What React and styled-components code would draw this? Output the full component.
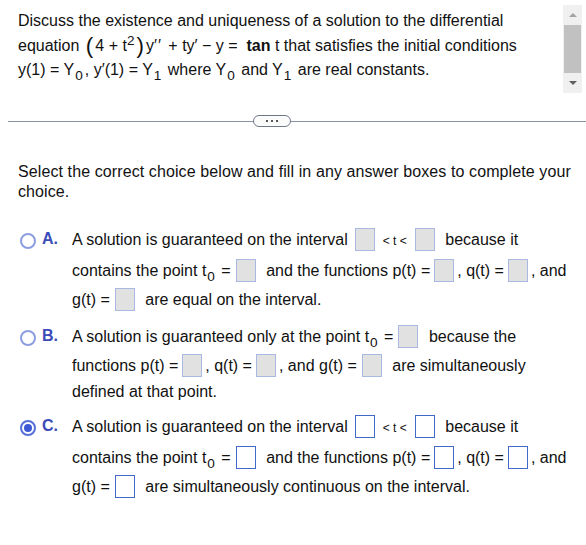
import React from 'react'
import styled, { createGlobalStyle } from 'styled-components'

const Global = createGlobalStyle`
  html, body { margin: 0; padding: 0; background: #fff; }
  body { font-family: Arial, "Liberation Sans", sans-serif; color: #111; }
`

const Page = styled.div`
  width: 586px;
  height: 545px;
  overflow: hidden;
`

const Top = styled.div`
  display: flex;
  height: 98px;
`

const Problem = styled.div`
  flex: 1;
  padding: 9px 0 0 18px;
  font-size: 16px;
  line-height: 24.5px;
  white-space: nowrap;
`

const Scroll = styled.div`
  width: 19px;
  margin: 5px 4px 5px 0;
  background: #f0f0f0;
  display: flex;
  flex-direction: column;
  align-items: center;
`

const Arrow = styled.div`
  width: 0;
  height: 0;
  border-left: 4px solid transparent;
  border-right: 4px solid transparent;
  ${p => p.down ? 'border-top: 4px solid #606060;' : 'border-bottom: 4px solid #a3a3a3;'}
  margin: 8px 0;
`

const Thumb = styled.div`
  width: 17px;
  flex: 1;
  background: #c1c1c1;
`

const Sub = styled.sub`
  font-size: 0.85em;
  vertical-align: -0.35em;
  line-height: 0;
  margin: 0 2px 0 1px;
`

const Sup = styled.sup`
  font-size: 0.85em;
  line-height: 0;
`

const Paren = styled.span`
  font-size: 1.4em;
  vertical-align: -0.08em;
  margin: 0 2px;
`

const Prime = styled.span`
  letter-spacing: 1px;
  margin-right: 2px;
`

const Divider = styled.div`
  display: flex;
  align-items: center;
  padding-left: 8px;
  margin-top: 16px;
  height: 14px;
`

const Rule = styled.div`
  flex: ${p => p.grow};
  height: 1px;
  background: #8a93a4;
`

const Pill = styled.div`
  width: 36px;
  height: 10px;
  border: 1px solid #6f7888;
  border-radius: 6px;
  background: #fbfbfc;
  display: flex;
  align-items: center;
  justify-content: center;
  gap: 3px;
`

const Dot = styled.span`
  width: 2px;
  height: 2px;
  background: #555;
`

const Prompt = styled.div`
  padding: 34px 12px 0 18px;
  font-size: 16px;
  line-height: 20px;
  letter-spacing: 0.1px;
`

const Options = styled.div`
  padding: 25px 0 0 20px;
  display: flex;
  flex-direction: column;
  gap: 10px;
`

const Option = styled.div`
  display: flex;
  align-items: flex-start;
`

const Radio = styled.span`
  width: 12px;
  height: 12px;
  margin-top: 6px;
  border: 2px solid ${p => p.on ? '#5570d8' : '#8c9ee0'};
  border-radius: 50%;
  display: flex;
  align-items: center;
  justify-content: center;
  flex-shrink: 0;
  &::after {
    content: '';
    width: 8px;
    height: 8px;
    border-radius: 50%;
    background: ${p => p.on ? '#3d5ad6' : 'transparent'};
  }
`

const Letter = styled.span`
  width: 36px;
  padding-left: 6px;
  box-sizing: border-box;
  font-weight: bold;
  font-size: 16px;
  color: #3b4bb8;
  line-height: 24px;
  flex-shrink: 0;
`

const Body = styled.div`
  font-size: 16px;
`

const Line = styled.div`
  white-space: nowrap;
  line-height: ${p => p.short ? '24px' : '29px'};
  margin-top: ${p => p.first ? '-2px' : '0'};
`

const Box = styled.span`
  display: inline-block;
  width: 20px;
  height: 23px;
  vertical-align: -6px;
  margin: 0 ${p => p.r ?? 6}px 0 ${p => p.l ?? 6}px;
  box-sizing: border-box;
  border: ${p => p.live ? '1.5px solid #4369c8' : '1px solid #a9b9e3'};
  background: ${p => p.live ? '#fff' : '#e1e1e1'};
`

const Small = styled.span`
  font-size: 12px;
  margin: 0 2px;
`

export default function App() {
  const t0 = <>t<Sub>0</Sub></>
  const optA = live => (
    <>
      <Line first>A solution is guaranteed on the interval<Box live={live} l={7} /><Small>&lt; t &lt;</Small><Box live={live} /> because it</Line>
      <Line>contains the point {t0} =<Box live={live} l={5} /> and the functions p(t) =<Box live={live} l={4} r={3} />, q(t) =<Box live={live} l={4} r={3} />, and</Line>
      <Line>g(t) =<Box live={live} l={5} r={6} /> {live ? 'are simultaneously continuous on the interval.' : 'are equal on the interval.'}</Line>
    </>
  )
  return (
    <Page>
      <Global />
      <Top>
        <Problem>
          Discuss the existence and uniqueness of a solution to the differential<br />
          equation <Paren>(</Paren>4 + t<Sup>2</Sup><Paren>)</Paren>y<Prime>′′</Prime> + ty′ − y = &nbsp;<b>tan</b> t that satisfies the initial conditions<br />
          y(1) = Y<Sub>0</Sub>, y′(1) = Y<Sub>1</Sub> where Y<Sub>0</Sub> and Y<Sub>1</Sub> are real constants.
        </Problem>
        <Scroll>
          <Arrow />
          <Thumb />
          <Arrow down />
        </Scroll>
      </Top>
      <Divider>
        <Rule grow={237} />
        <Pill><Dot /><Dot /><Dot /></Pill>
        <Rule grow={286} />
      </Divider>
      <Prompt>
        Select the correct choice below and fill in any answer boxes to complete your choice.
      </Prompt>
      <Options>
        <Option>
          <Radio />
          <Letter>A.</Letter>
          <Body>{optA(false)}</Body>
        </Option>
        <Option>
          <Radio />
          <Letter>B.</Letter>
          <Body>
            <Line first>A solution is guaranteed only at the point {t0} =<Box l={5} /> because the</Line>
            <Line>functions p(t) =<Box l={4} r={3} />, q(t) =<Box l={4} r={3} />, and g(t) =<Box l={5} /> are simultaneously</Line>
            <Line short>defined at that point.</Line>
          </Body>
        </Option>
        <Option>
          <Radio on />
          <Letter>C.</Letter>
          <Body>{optA(true)}</Body>
        </Option>
      </Options>
    </Page>
  )
}
